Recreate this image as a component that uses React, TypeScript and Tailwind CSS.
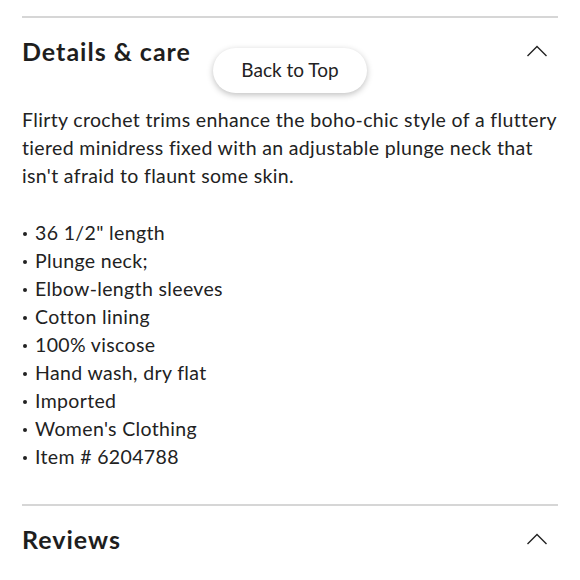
import React from "react";

const Chevron = () => (
  <svg width="22" height="12" viewBox="0 0 22 12" fill="none" className="text-[#222]">
    <path d="M1.5 11 L11 1.5 L20.5 11" stroke="currentColor" strokeWidth="1.4" />
  </svg>
);

export default function App() {
  const items = [
    '36 1/2" length',
    "Plunge neck;",
    "Elbow-length sleeves",
    "Cotton lining",
    "100% viscose",
    "Hand wash, dry flat",
    "Imported",
    "Women's Clothing",
    "Item # 6204788",
  ];
  return (
    <div
      className="relative w-[580px] h-[580px] bg-white overflow-hidden px-[22px] text-[#222]"
      style={{ fontFamily: "Lato, 'Noto Sans', sans-serif" }}
    >
      <div className="pt-[16px] border-b-[2px] border-[#d6d6d6]" />
      <div className="flex items-center justify-between h-[66px] pr-[10px]">
        <h2 className="text-[25px] tracking-[1px] font-bold text-[#1e1e1e] leading-none">Details &amp; care</h2>
        <Chevron />
      </div>
      <p className="text-[19.5px] tracking-[0.35px] leading-[28px] mt-[22px]">
        Flirty crochet trims enhance the boho-chic style of a fluttery tiered minidress fixed with an adjustable
        plunge neck that isn't afraid to flaunt some skin.
      </p>
      <ul className="text-[19.5px] tracking-[0.35px] leading-[28px] mt-[29px]">
        {items.map((t) => (
          <li key={t} className="flex items-center">
            <span className="inline-block w-[4px] h-[4px] rounded-full bg-[#222] ml-[1px] mr-[8px] mt-[2px]" />
            <span>{t}</span>
          </li>
        ))}
      </ul>
      <div className="mt-[33px] border-b-[2px] border-[#d6d6d6]" />
      <div className="flex items-center justify-between h-[66px] pr-[10px]">
        <h2 className="text-[25px] tracking-[1px] font-bold text-[#1e1e1e] leading-none">Reviews</h2>
        <Chevron />
      </div>
      <button className="absolute left-[213px] top-[48px] w-[154px] h-[45px] rounded-full bg-white shadow-[0_2px_6px_rgba(0,0,0,0.25)] text-[19px] text-[#222]">
        Back to Top
      </button>
    </div>
  );
}
